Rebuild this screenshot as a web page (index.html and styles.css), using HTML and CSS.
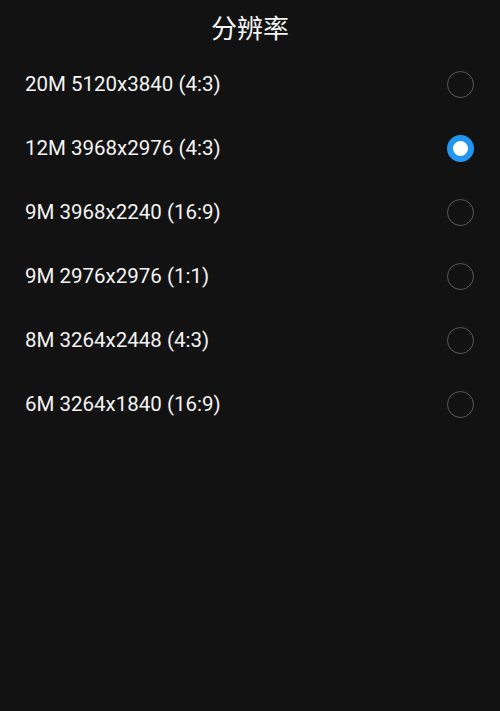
FILE: index.html
```html
<!DOCTYPE html>
<html lang="zh-CN">
<head>
    <meta charset="UTF-8">
    <meta name="viewport" content="width=device-width, initial-scale=1.0">
    <title>分辨率</title>
    <link rel="stylesheet" href="styles.css">
</head>
<body>
    <h1 class="title">分辨率</h1>
    <ul class="options">
        <li class="option"><span>20M 5120x3840 (4:3)</span><span class="radio"></span></li>
        <li class="option"><span>12M 3968x2976 (4:3)</span><span class="radio checked"></span></li>
        <li class="option"><span>9M 3968x2240 (16:9)</span><span class="radio"></span></li>
        <li class="option"><span>9M 2976x2976 (1:1)</span><span class="radio"></span></li>
        <li class="option"><span>8M 3264x2448 (4:3)</span><span class="radio"></span></li>
        <li class="option"><span>6M 3264x1840 (16:9)</span><span class="radio"></span></li>
    </ul>
</body>
</html>
```

FILE: styles.css
```css
body {
    margin: 0;
    height: 711px;
    background-color: #121212;
    color: #f4f4f4;
    font-family: Roboto, "Noto Sans CJK SC", sans-serif;
}
.title {
    margin: 0;
    height: 52px;
    display: flex;
    align-items: center;
    justify-content: center;
    font-family: "Noto Sans CJK SC", sans-serif;
    font-size: 26px;
    font-weight: 400;
}
.options {
    list-style: none;
    margin: 0;
    padding: 0;
}
.option {
    height: 64px;
    display: flex;
    align-items: center;
    justify-content: space-between;
    padding: 0 26px 0 25px;
    font-size: 20.5px;
}
.radio {
    width: 27px;
    height: 27px;
    box-sizing: border-box;
    border: 1.5px solid #5c5c5c;
    border-radius: 50%;
}
.radio.checked {
    border: 6.5px solid #2196f3;
    background-color: #fff;
}
```
